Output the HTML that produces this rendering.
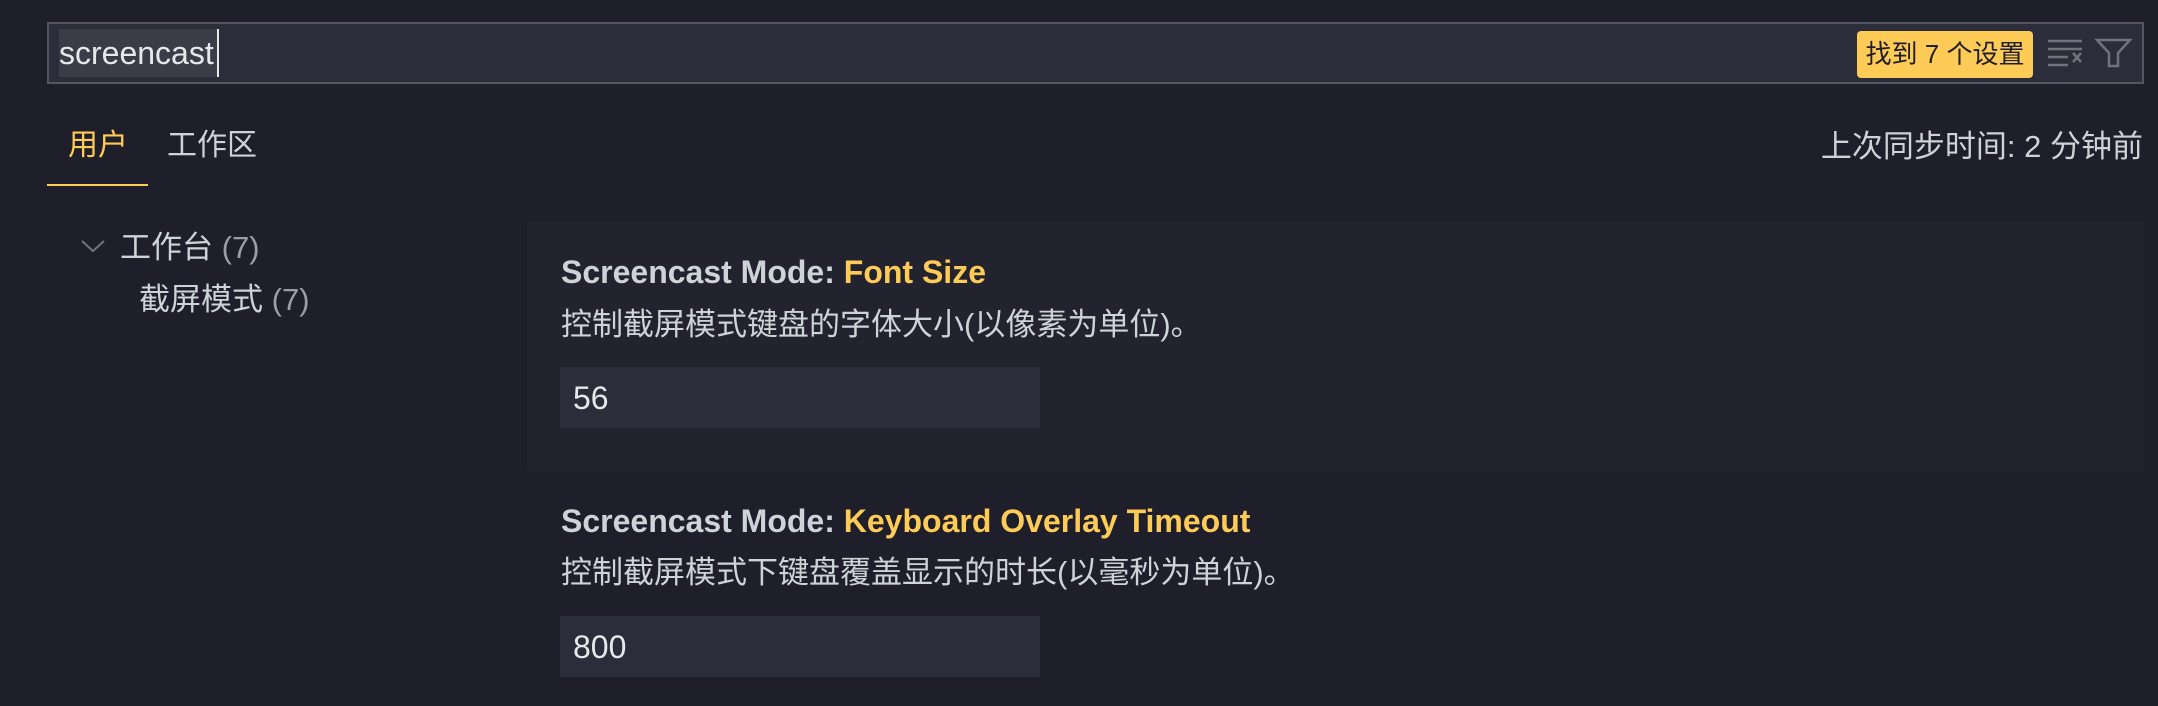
<!DOCTYPE html>
<html><head><meta charset="utf-8"><style>
*{margin:0;padding:0;box-sizing:border-box}
body{width:2158px;height:706px;background:#1e1f2b;position:relative;overflow:hidden;font-family:"Liberation Sans","Noto Sans CJK SC",sans-serif;color:#cdd3d6}
.abs{position:absolute;white-space:nowrap}
</style></head><body>
<div class="abs" style="left:47px;top:22px;width:2097px;height:62px;background:#2b2d3a;border:2px solid #54565f"></div>
<div class="abs" style="left:59px;top:29px;width:159px;height:48px;background:#3a3c48"></div>
<div class="abs" style="left:59px;top:33px;font-size:32px;line-height:40px;color:#e6e8ea">screencast</div>
<div class="abs" style="left:217px;top:29px;width:2px;height:48px;background:#e6e8ea"></div>
<div class="abs" style="left:1857px;top:31px;width:176px;height:47px;background:#ffcb57;border-radius:4px;color:#1e1f2b;font-size:26px;line-height:47px;text-align:center">找到 7 个设置</div>
<svg class="abs" style="left:2046px;top:36px" width="90" height="34" viewBox="0 0 90 34">
<g stroke="#70727c" stroke-width="2.5" fill="none">
<line x1="2" y1="5" x2="36" y2="5"/><line x1="2" y1="13" x2="36" y2="13"/><line x1="2" y1="21" x2="22" y2="21"/><line x1="2" y1="29" x2="22" y2="29"/>
<line x1="27" y1="17" x2="35" y2="26"/><line x1="35" y1="17" x2="27" y2="26"/>
<path d="M51 4 H84 L72 17 V30 H63 V17 Z"/>
</g></svg>
<div class="abs" style="left:68px;top:127px;font-size:30px;line-height:38px;color:#ffcb57">用户</div>
<div class="abs" style="left:167px;top:127px;font-size:30px;line-height:38px">工作区</div>
<div class="abs" style="left:47px;top:184px;width:101px;height:2px;background:#ffcb57"></div>
<div class="abs" style="right:15px;top:128px;font-size:31px;line-height:38px">上次同步时间: 2 分钟前</div>
<svg class="abs" style="left:80px;top:238px" width="26" height="16"><path d="M2 3 L13 13 L24 3" stroke="#70727c" stroke-width="2" fill="none"/></svg>
<div class="abs" style="left:120px;top:229px;font-size:31px;line-height:38px">工作台 <span style="color:#9a9ea6">(7)</span></div>
<div class="abs" style="left:139px;top:281px;font-size:31px;line-height:38px">截屏模式 <span style="color:#9a9ea6">(7)</span></div>
<div class="abs" style="left:527px;top:221px;width:1617px;height:250px;background:#22232f"></div>
<div class="abs" style="left:561px;top:253px;font-size:32px;line-height:38px;font-weight:bold">Screencast Mode: <span style="color:#ffcb57">Font Size</span></div>
<div class="abs" style="left:561px;top:306px;font-size:31px;line-height:38px">控制截屏模式键盘的字体大小(以像素为单位)。</div>
<div class="abs" style="left:560px;top:367px;width:480px;height:61px;background:#2b2d3a"></div>
<div class="abs" style="left:573px;top:380px;font-size:32px;line-height:36px;color:#e6e8ea">56</div>
<div class="abs" style="left:561px;top:502px;font-size:32px;line-height:38px;font-weight:bold">Screencast Mode: <span style="color:#ffcb57">Keyboard Overlay Timeout</span></div>
<div class="abs" style="left:561px;top:554px;font-size:31px;line-height:38px">控制截屏模式下键盘覆盖显示的时长(以毫秒为单位)。</div>
<div class="abs" style="left:560px;top:616px;width:480px;height:61px;background:#2b2d3a"></div>
<div class="abs" style="left:573px;top:629px;font-size:32px;line-height:36px;color:#e6e8ea">800</div>
</body></html>
